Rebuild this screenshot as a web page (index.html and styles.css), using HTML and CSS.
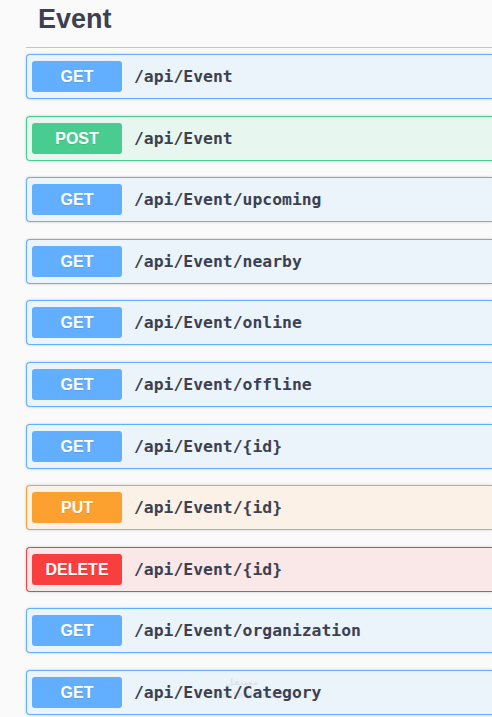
FILE: index.html
```html
<!DOCTYPE html>
<html>
<head>
<meta charset="utf-8">
<link rel="stylesheet" href="styles.css">
</head>
<body>
<div class="section">
  <h4 class="tag">Event</h4>
  <div class="ops">
    <div class="op get"><span class="method">GET</span><span class="path">/api/Event</span></div>
    <div class="op post"><span class="method">POST</span><span class="path">/api/Event</span></div>
    <div class="op get"><span class="method">GET</span><span class="path">/api/Event/upcoming</span></div>
    <div class="op get"><span class="method">GET</span><span class="path">/api/Event/nearby</span></div>
    <div class="op get"><span class="method">GET</span><span class="path">/api/Event/online</span></div>
    <div class="op get"><span class="method">GET</span><span class="path">/api/Event/offline</span></div>
    <div class="op get"><span class="method">GET</span><span class="path">/api/Event/{id}</span></div>
    <div class="op put"><span class="method">PUT</span><span class="path">/api/Event/{id}</span></div>
    <div class="op delete"><span class="method">DELETE</span><span class="path">/api/Event/{id}</span></div>
    <div class="op get"><span class="method">GET</span><span class="path">/api/Event/organization</span></div>
    <div class="op get"><span class="method">GET</span><span class="path">/api/Event/Category</span></div>
  </div>
</div>
<div class="watermark">مستقل mostaql.com</div>
</body>
</html>
```
FILE: styles.css
```css
html, body {
  margin: 0;
  padding: 0;
  background: #fafafa;
  overflow: hidden;
}
body {
  width: 492px;
  height: 717px;
  position: relative;
  font-family: "Liberation Sans", Arial, sans-serif;
}
.section {
  padding-left: 26px;
  width: 466px;
}
.tag {
  margin: 0;
  height: 48px;
  box-sizing: border-box;
  padding: 2px 0 0 12px;
  font-size: 27px;
  line-height: 34px;
  font-weight: bold;
  color: #3b4151;
  border-bottom: 1px solid #c3c5ca;
}
.ops {
  padding-top: 6px;
  display: flex;
  flex-direction: column;
  gap: 16.6px;
}
.op {
  height: 45px;
  box-sizing: border-box;
  border: 1px solid;
  border-right: 0;
  border-radius: 4px 0 0 4px;
  box-shadow: 0 0 3px rgba(0,0,0,0.19);
  display: flex;
  align-items: center;
  padding: 0 5px;
}
.method {
  width: 90px;
  height: 31px;
  border-radius: 3px;
  color: #fff;
  font-weight: bold;
  font-size: 16px;
  line-height: 31px;
  text-align: center;
  text-shadow: 0 1px 0 rgba(0,0,0,0.1);
  flex: none;
}
.path {
  margin-left: 12px;
  font-family: "DejaVu Sans Mono", monospace;
  font-weight: bold;
  font-size: 16.4px;
  color: #3b4151;
}
.get { background: #ebf3fb; border-color: #61affe; }
.get .method { background: #61affe; }
.post { background: #e8f6f0; border-color: #49cc90; }
.post .method { background: #49cc90; }
.put { background: #fbf1e6; border-color: #fca130; }
.put .method { background: #fca130; }
.delete { background: #fae7e7; border-color: #f93e3e; }
.delete .method { background: #f93e3e; }
.watermark {
  position: absolute;
  left: 212px;
  top: 676px;
  width: 60px;
  text-align: center;
  color: rgba(120,120,120,0.13);
  font-family: "DejaVu Sans", sans-serif;
  font-weight: bold;
  font-size: 9px;
  line-height: 13px;
  pointer-events: none;
}
```
